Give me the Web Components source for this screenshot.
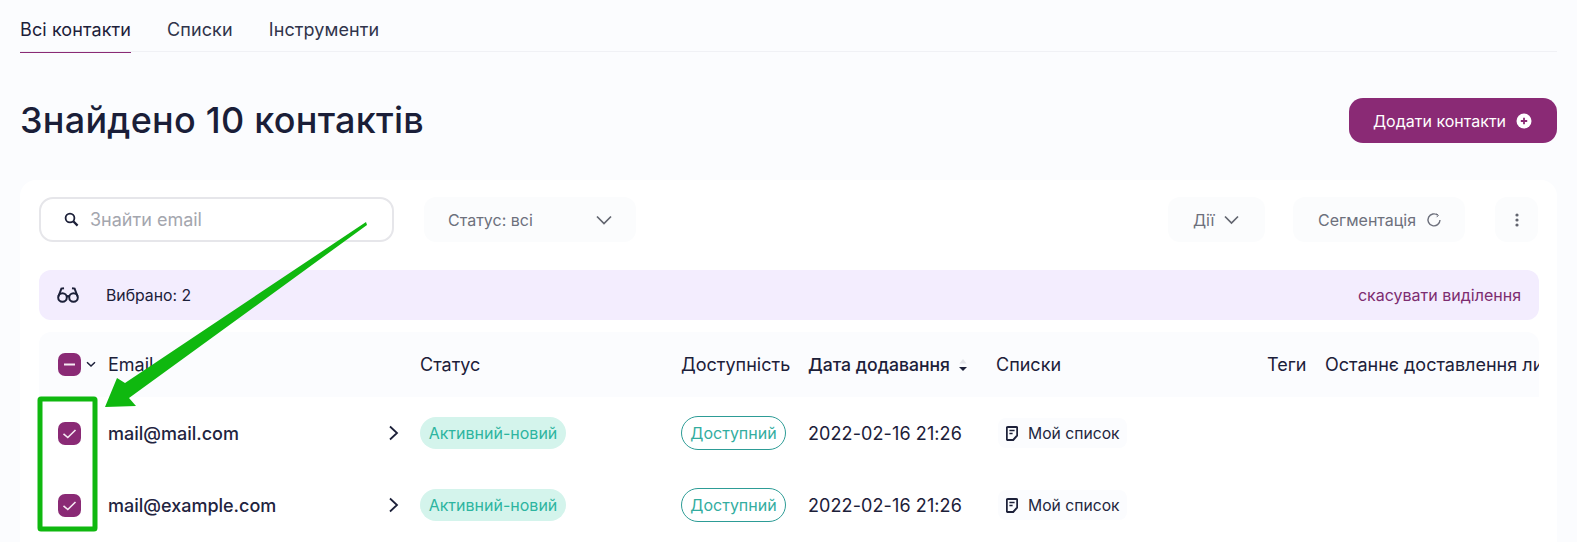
<!DOCTYPE html>
<html lang="uk">
<head>
<meta charset="UTF-8">
<title>Контакти</title>
<style>
  html, body { margin: 0; height: 542px; overflow: hidden; background: #fbfcfe; }
  body { font-family: Inter, "Noto Sans", sans-serif; color: #1c2039; position: relative;
    --purple: #8a2a75; --cols: 69px 312px 261px 127px 188px 271px 58px 300px; }
</style>
</head>
<body>

<template id="tabs-tpl">
  <style>
    :host { display: flex; gap: 36px; height: 52px; margin: 0 20px; box-sizing: border-box; border-bottom: 1px solid #f0f1f5; font-size: 18px; letter-spacing: .1px; }
    ::slotted(a) { display: block; padding-top: 19px; height: 33px; color: #30344b; }
    ::slotted(a.on) { border-bottom: 1px solid var(--purple); color: #1c2039; }
  </style>
  <slot></slot>
</template>

<template id="head-tpl">
  <style>
    :host { display: flex; justify-content: space-between; align-items: center; margin: 46px 20px 37px; height: 45px; }
    h1 { margin: 0 0 2px; font-size: 36px; font-weight: 500; color: #1a1e38; letter-spacing: .25px; }
    button { all: unset; box-sizing: border-box; width: 208px; height: 45px; background: var(--purple); color: #fff; border-radius: 14px;
      display: flex; align-items: center; padding-left: 24px; gap: 10px; font-size: 16px; }
    svg { width: 16px; height: 16px; }
  </style>
  <h1><slot></slot></h1>
  <button>Додати контакти
    <svg viewBox="0 0 16 16"><circle cx="8" cy="8" r="7.5" fill="#fff"/><path d="M8 4.8v6.4M4.8 8h6.4" stroke="#8a2a75" stroke-width="1.8"/></svg>
  </button>
</template>

<template id="filter-tpl">
  <style>
    :host { display: flex; align-items: center; box-sizing: border-box; height: 45px; background: #fbfcfd; border-radius: 12px; color: #6d707c; font-size: 16px; }
  </style>
  <slot></slot>
</template>

<template id="toolbar-tpl">
  <style>
    :host { display: flex; align-items: center; height: 45px; }
    .search { box-sizing: border-box; width: 355px; height: 45px; border: 2px solid #e6e6ea; border-radius: 14px; background: #fff;
      display: flex; align-items: center; padding-left: 23px; gap: 11px; color: #a4a6ae; font-size: 18px; margin-right: 30px; }
    .grow { flex: 1; }
    svg { flex: none; }
  </style>
  <div class="search">
    <svg width="15" height="15" viewBox="0 0 15 15" fill="none" stroke="#1c2039" stroke-width="1.8"><circle cx="6" cy="6" r="4.4"/><path d="M9.4 9.4 13.6 13.6" stroke-width="2.2"/></svg>
    Знайти email
  </div>
  <filter-box style="width:212px;padding-left:24px;justify-content:flex-start;">
    Статус: всі
    <svg style="margin-left:62px" width="18" height="10" viewBox="0 0 18 10" fill="none" stroke="#62656f" stroke-width="1.7"><path d="M2 1.5 9 8.5 16 1.5"/></svg>
  </filter-box>
  <div class="grow"></div>
  <filter-box style="width:97px;padding-left:25px;gap:8px;margin-right:28px;">
    Дії
    <svg width="17" height="10" viewBox="0 0 17 10" fill="none" stroke="#62656f" stroke-width="1.7"><path d="M2 1.5 8.5 8 15 1.5"/></svg>
  </filter-box>
  <filter-box style="width:172px;padding-left:25px;gap:10px;margin-right:30px;">
    Сегментація
    <svg width="16" height="16" viewBox="0 0 16 16" fill="none" stroke="#6d707c" stroke-width="1.4"><path d="M11.8 3.2A6 6 0 1 0 14 8"/><path d="M10.6 1.6 12.4 3.4 10.6 5.2" stroke-width="1"/></svg>
  </filter-box>
  <filter-box style="width:43px;justify-content:center;margin-right:1px;">
    <svg width="4" height="14" viewBox="0 0 4 14" fill="#62656f"><circle cx="2" cy="2" r="1.6"/><circle cx="2" cy="7" r="1.6"/><circle cx="2" cy="12" r="1.6"/></svg>
  </filter-box>
</template>

<template id="selbar-tpl">
  <style>
    :host { display: flex; align-items: center; height: 50px; margin-top: 28px; box-sizing: border-box; padding: 0 18px; background: #f3edfe; border-radius: 12px; font-size: 15.8px; }
    svg { margin-right: 27px; }
    .grow { flex: 1; }
    a { color: #7d2c70; font-size: 16px; }
  </style>
  <svg width="22" height="16" viewBox="0 0 22 16" fill="none" stroke="#1c2039" stroke-width="2">
    <circle cx="5.5" cy="10.5" r="4.3"/><circle cx="16.5" cy="10.5" r="4.3"/>
    <path d="M9.6 9.6C10.4 9 11.6 9 12.4 9.6M1.4 9.5 4.4 1.6 7 1.2M20.6 9.5 17.6 1.6 15 1.2"/>
  </svg>
  <span><slot></slot></span>
  <div class="grow"></div>
  <a>скасувати виділення</a>
</template>

<template id="check-tpl">
  <style>
    :host { display: block; width: 23px; height: 23px; background: var(--purple); border-radius: 7px; }
    svg { display: block; }
  </style>
  <svg width="23" height="23" viewBox="0 0 23 23" fill="none" stroke="#f6e9f3" stroke-width="1.6"></svg>
</template>

<template id="head-row-tpl">
  <style>
    :host { display: grid; grid-template-columns: var(--cols); align-items: center; height: 65px; margin-top: 12px; background: #fbfcfe; border-radius: 12px 12px 0 0; font-size: 18px; white-space: nowrap; overflow: hidden; color: #1c2039; }
    .first { display: flex; align-items: center; padding-left: 19px; gap: 5px; }
    .sort { display: inline-flex; align-items: center; gap: 8px; font-weight: 500; font-size: 17.6px; }
  </style>
  <div class="first">
    <ui-check mode="some"></ui-check>
    <svg width="10" height="7" viewBox="0 0 10 7" fill="none" stroke="#1c2039" stroke-width="1.5"><path d="M1 1.2 5 5 9 1.2"/></svg>
  </div>
  <div>Email</div>
  <div>Статус</div>
  <div>Доступність</div>
  <div class="sort">Дата додавання
    <svg width="10" height="16" viewBox="0 0 10 16"><path d="M5 2 8.5 6.5h-7z" fill="#e2e3e8"/><path d="M1 10h8L5 14z" fill="#1c2039"/></svg>
  </div>
  <div>Списки</div>
  <div>Теги</div>
  <div>Останнє доставлення листа</div>
</template>

<template id="row-tpl">
  <style>
    :host { display: grid; grid-template-columns: var(--cols); align-items: center; height: 72px; font-size: 18px; white-space: nowrap; overflow: hidden; }
    .c { padding-left: 19px; }
    .mail { font-weight: 500; color: #1f2440; display: flex; justify-content: space-between; align-items: center; padding-right: 21px; }
    .st { justify-self: start; box-sizing: border-box; height: 32px; width: 146px; border-radius: 16px; background: #d4f4ec; color: #2db5a0; font-size: 16px; display: flex; align-items: center; justify-content: center; }
    .av { justify-self: start; box-sizing: border-box; height: 34px; width: 105px; border-radius: 17px; border: 1px solid #2d9c96; color: #33ad9f; font-size: 16px; display: flex; align-items: center; justify-content: center; }
    .date { letter-spacing: .1px; }
    .list { justify-self: start; box-sizing: border-box; margin-left: 2px; height: 30px; width: 129px; border-radius: 8px; background: #fbfcfe; display: flex; align-items: center; padding-left: 8px; gap: 10px; font-size: 15.7px; color: #23273f; }
  </style>
  <div class="c"><ui-check mode="all"></ui-check></div>
  <div class="mail"><span><slot></slot></span>
    <svg width="11" height="16" viewBox="0 0 11 16" fill="none" stroke="#1c2039" stroke-width="1.8"><path d="M2 1.5 9 8 2 14.5"/></svg>
  </div>
  <div class="st">Активний-новий</div>
  <div class="av">Доступний</div>
  <div class="date">2022-02-16 21:26</div>
  <div class="list">
    <svg width="12" height="15" viewBox="0 0 12 15" fill="none" stroke="#1c2039" stroke-width="1.9"><path d="M1.8 1h8.4a1 1 0 0 1 1 1v7.5L7.2 14H1.8a1 1 0 0 1-1-1V2a1 1 0 0 1 1-1z"/><path d="M3.4 4.4h5.2M3.4 7.4h3.2" stroke-width="1.5"/></svg>
    Мой список
  </div>
</template>

<template id="note-tpl">
  <style>
    :host { position: absolute; left: 0; top: 0; width: 1577px; height: 542px; pointer-events: none; }
    svg { display: block; }
  </style>
  <svg width="1577" height="542" viewBox="0 0 1577 542">
    <rect x="40" y="399" width="55" height="130" rx="1" fill="none" stroke="#0fb80f" stroke-width="5"/>
    <path d="M366 222 367 225 129 398 136 406 105 407 117 378 125 383 Z" fill="#0fb80f"/>
  </svg>
</template>

<contact-tabs><a class="on">Всі контакти</a><a>Списки</a><a>Інструменти</a></contact-tabs>
<page-head>Знайдено 10 контактів</page-head>
<contact-card>
  <contact-toolbar></contact-toolbar>
  <selection-bar>Вибрано: 2</selection-bar>
  <table-head></table-head>
  <contact-row>mail@mail.com</contact-row>
  <contact-row>mail@example.com</contact-row>
</contact-card>
<arrow-note></arrow-note>

<script>
  // every element just clones its template into an open shadow root
  function simple(tag, tplId) {
    customElements.define(tag, class extends HTMLElement {
      constructor() {
        super();
        this.attachShadow({ mode: 'open' });
        this.shadowRoot.appendChild(document.getElementById(tplId).content.cloneNode(true));
      }
    });
  }

  // defined first, the toolbar and the rows use them
  simple('filter-box', 'filter-tpl');

  class UiCheck extends HTMLElement {
    constructor() {
      super();
      this.attachShadow({ mode: 'open' });
      this.shadowRoot.appendChild(document.getElementById('check-tpl').content.cloneNode(true));
    }
    connectedCallback() {
      const some = this.getAttribute('mode') === 'some';
      this.shadowRoot.querySelector('svg').innerHTML = some
        ? '<path d="M6 11.5h11" stroke-width="2.2"/>'
        : '<path d="M5.5 11.8 9.8 15.5 17.5 8"/>';
    }
  }
  customElements.define('ui-check', UiCheck);

  customElements.define('contact-card', class extends HTMLElement {
    constructor() {
      super();
      this.attachShadow({ mode: 'open' }).innerHTML = `
        <style>
          :host { display: block; margin: 0 20px; padding: 17px 18px 0 19px; height: 362px; background: #fff; border-radius: 16px 16px 0 0; box-sizing: border-box; }
        </style>
        <slot></slot>`;
    }
  });

  simple('contact-tabs', 'tabs-tpl');
  simple('page-head', 'head-tpl');
  simple('contact-toolbar', 'toolbar-tpl');
  simple('selection-bar', 'selbar-tpl');
  simple('table-head', 'head-row-tpl');
  simple('contact-row', 'row-tpl');
  simple('arrow-note', 'note-tpl');
</script>
</body>
</html>
